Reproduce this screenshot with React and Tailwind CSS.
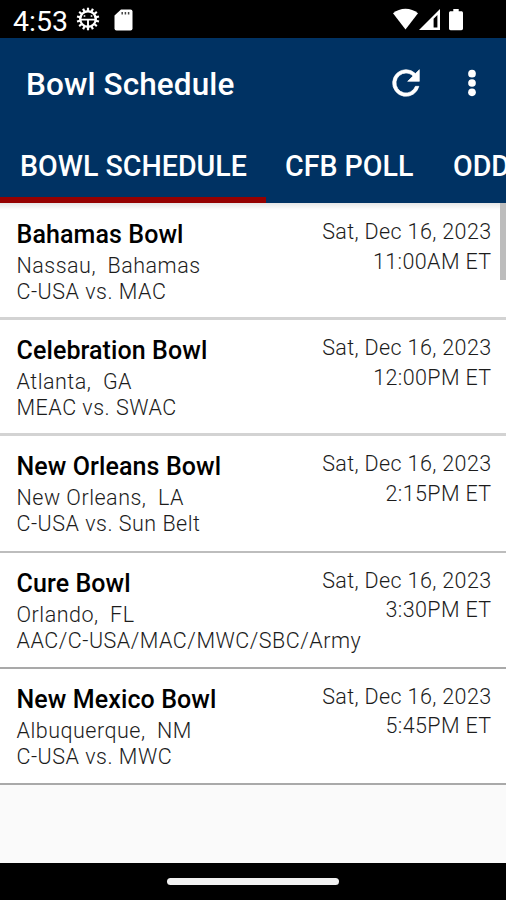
const games = [
  { name: "Bahamas Bowl", place: "Nassau,  Bahamas", teams: "C-USA vs. MAC", time: "11:00AM ET", line: "border-b-[3px] border-[#d3d3d3]" },
  { name: "Celebration Bowl", place: "Atlanta,  GA", teams: "MEAC vs. SWAC", time: "12:00PM ET", line: "border-b-[3px] border-[#d3d3d3]" },
  { name: "New Orleans Bowl", place: "New Orleans,  LA", teams: "C-USA vs. Sun Belt", time: "2:15PM ET", line: "border-b-2 border-[#bdbdbd]" },
  { name: "Cure Bowl", place: "Orlando,  FL", teams: "AAC/C-USA/MAC/MWC/SBC/Army", time: "3:30PM ET", line: "border-b-2 border-[#a9a9a9]" },
  { name: "New Mexico Bowl", place: "Albuquerque,  NM", teams: "C-USA vs. MWC", time: "5:45PM ET", line: "border-b-2 border-[#a9a9a9]" },
];

const teeth = Array.from({ length: 14 }, (_, i) => (i * 360) / 14);

function StatusBar() {
  return (
    <div className="flex h-[38px] shrink-0 items-start bg-black text-white">
      <span className="ml-[13px] mt-[6px] w-[56px] whitespace-nowrap text-[28.5px] leading-[32px]">4:53</span>
      <svg className="ml-[7px] mt-[7px] h-6 w-6 shrink-0" viewBox="0 0 24 24" fill="none" stroke="currentColor">
        <circle cx="12" cy="12" r="7.8" strokeWidth="2.4" />
        {teeth.map((a) => (
          <path key={a} d="M12 4V.7" strokeWidth="2.2" transform={`rotate(${a} 12 12)`} />
        ))}
        <path d="M4 12.6h16M12 12.6V20" strokeWidth="1.9" />
        <path d="M8.5 8.2v1.6M15.5 8.2v1.6" strokeWidth="1.6" />
      </svg>
      <svg className="ml-[14px] mt-[9px] h-[22px] w-[19px] shrink-0" viewBox="0 0 19 22">
        <path d="M7 .5h9.5a2 2 0 0 1 2 2v17a2 2 0 0 1-2 2h-14a2 2 0 0 1-2-2V6.5z" fill="#fff" />
        <path d="M8.2 3v2.6M11.4 3v2.6M14.6 3v2.6" stroke="#444" strokeWidth="1.5" />
      </svg>
      <svg className="ml-auto mt-[8px] h-[22px] w-[25px] shrink-0" viewBox="0 0 25 22">
        <path d="M0 5.2C7-.8 18-.8 25 5.2L12.5 21.5z" fill="#fff" />
      </svg>
      <svg className="ml-[1px] mt-[9px] h-[22px] w-[22px] shrink-0" viewBox="0 0 22 22">
        <path fillRule="evenodd" d="M21 0v21H0zM18.4 6L14.6 9.8v8.7h3.8z" fill="#fff" />
      </svg>
      <svg className="ml-[8px] mr-[43px] mt-[8px] h-[23px] w-[14px] shrink-0" viewBox="0 0 14 23">
        <path d="M4.3 1h5.4v2.2h2.6c1 0 1.7.7 1.7 1.7v15.6c0 1-.7 1.7-1.7 1.7H1.7C.7 22.2 0 21.5 0 20.5V4.9c0-1 .7-1.7 1.7-1.7h2.6z" fill="#fff" />
      </svg>
    </div>
  );
}

export default function App() {
  return (
    <div className="flex h-[900px] w-[506px] flex-col overflow-hidden bg-[#fafafa] font-['Roboto',sans-serif] text-black">
      <StatusBar />
      <header className="flex h-[164.5px] shrink-0 flex-col bg-[#003263] text-white">
        <div className="flex h-[92px] items-center">
          <h1 className="ml-[26px] mt-px whitespace-nowrap text-[31.5px] font-medium leading-9 tracking-[0.1px]">Bowl Schedule</h1>
          <svg className="-mt-[3px] ml-auto h-10 w-10 shrink-0" viewBox="0 0 24 24" fill="currentColor" stroke="currentColor" strokeWidth="0.4">
            <path d="M17.65 6.35A7.96 7.96 0 0 0 12 4a8 8 0 1 0 7.73 10h-2.08A6 6 0 1 1 12 6c1.66 0 3.14.69 4.22 1.78L13 11h7V4z" />
          </svg>
          <svg className="-mt-[3px] ml-[26px] mr-[14px] h-10 w-10 shrink-0" viewBox="0 0 24 24" fill="currentColor">
            <circle cx="12" cy="6.4" r="2.3" />
            <circle cx="12" cy="12" r="2.3" />
            <circle cx="12" cy="17.6" r="2.3" />
          </svg>
        </div>
        <nav className="flex h-[72.5px] whitespace-nowrap text-[28.6px] font-medium leading-[73px]">
          <span className="h-full w-[266px] shrink-0 border-b-[6px] border-[#950000] pl-5">BOWL SCHEDULE</span>
          <span className="w-[167px] shrink-0 pl-[19px]">CFB POLL</span>
          <span className="pl-5">ODDS</span>
        </nav>
      </header>
      <main className="relative flex-1">
        <div className="h-[1.5px] bg-white" />
        {games.map((g) => (
          <section key={g.name} className={`flex h-[116.2px] justify-between bg-white pl-[16.5px] pr-[14.5px] ${g.line}`}>
            <div className="whitespace-pre pt-[17px]">
              <h2 className="text-[25px] font-medium leading-7 tracking-[0.1px]">{g.name}</h2>
              <p className="mt-[4px] text-[21.5px] font-light leading-[26px] tracking-[0.5px] text-[#1c1c1c]">{g.place}</p>
              <p className="w-0 text-[21.5px] font-light leading-[26px] tracking-[0.5px] text-[#1c1c1c]">{g.teams}</p>
            </div>
            <div className="whitespace-nowrap pt-[13px] text-right text-[21.5px] font-light leading-[29.5px] tracking-[0.37px] text-[#1c1c1c]">
              <p>Sat, Dec 16, 2023</p>
              <p>{g.time}</p>
            </div>
          </section>
        ))}
        <div className="absolute left-0 top-0 h-[7px] w-full bg-linear-to-b from-black/10 to-transparent" />
        <div className="absolute right-0 top-0 h-[77px] w-[6px] bg-[#bdbdbd]" />
      </main>
      <footer className="flex h-[37px] shrink-0 justify-center bg-black">
        <div className="mt-[15px] h-[7px] w-[172px] rounded-full bg-[#f1f1f1]" />
      </footer>
    </div>
  );
}
